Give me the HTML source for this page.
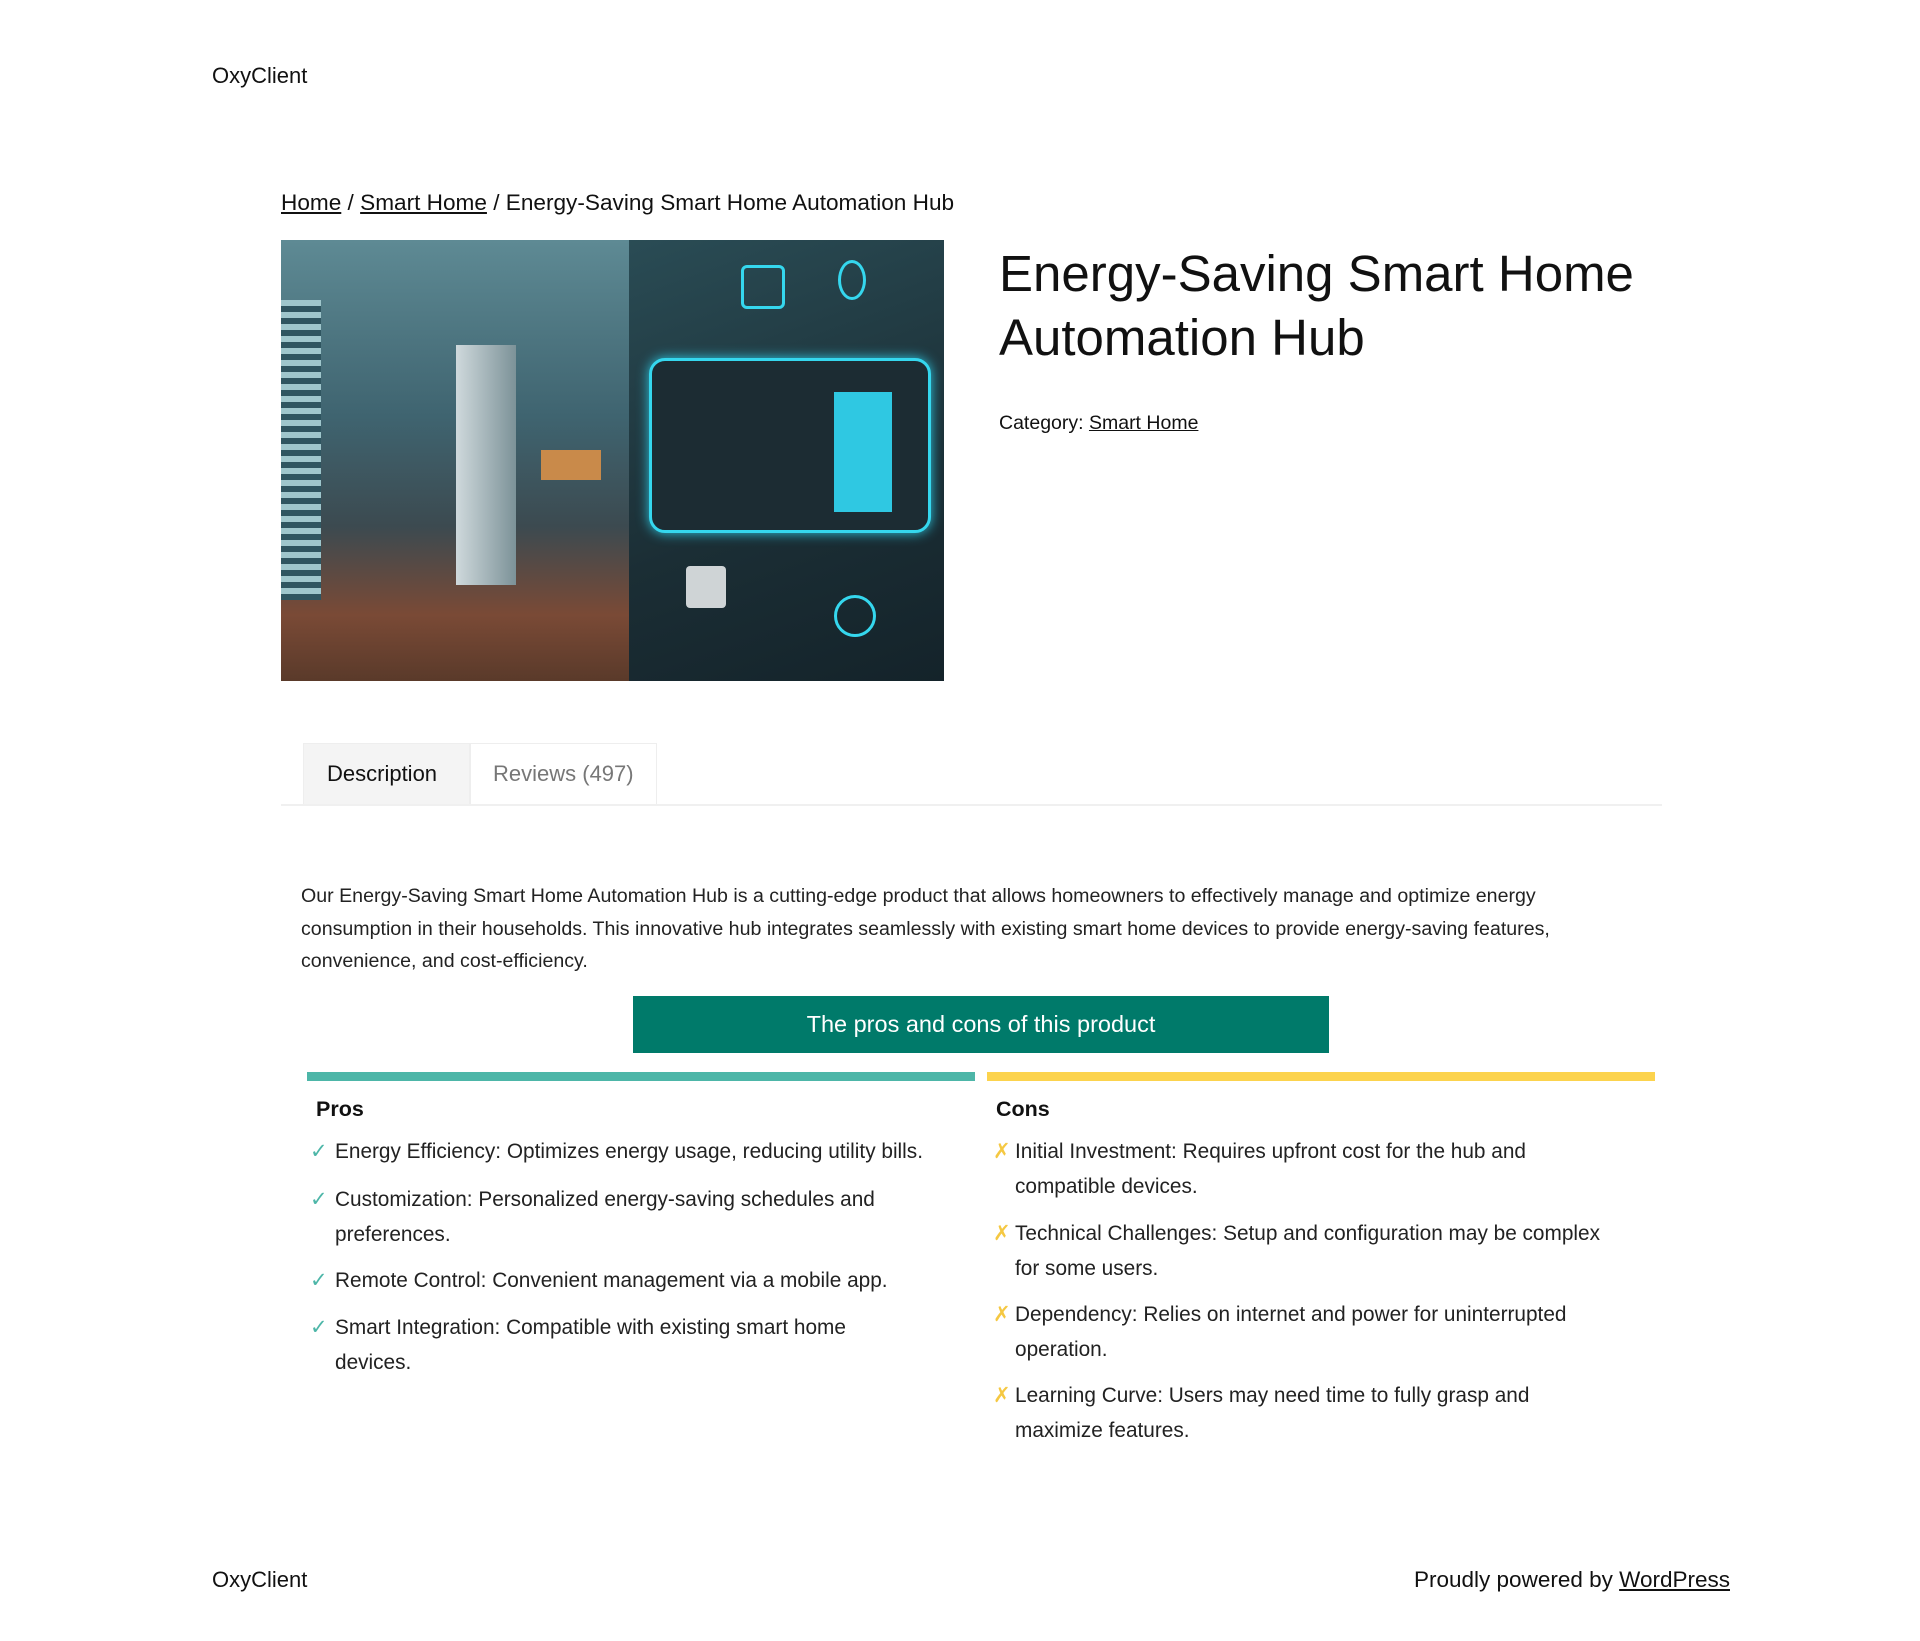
<!DOCTYPE html>
<html><head><meta charset="utf-8"><style>
*{margin:0;padding:0;box-sizing:border-box}
body{width:1920px;height:1641px;background:#fff;font-family:"Liberation Sans",sans-serif;color:#111;position:relative;overflow:hidden}
.a{position:absolute;white-space:nowrap}
a{color:#111;text-decoration:underline}
.li{font-size:20.8px;line-height:34.5px;color:#222}
.ck{color:#4db6a8;position:absolute;left:-25px}
.cx{color:#f5c842;position:absolute;left:-22px}
</style></head><body>
<div class="a" style="left:212px;top:63px;font-size:22px">OxyClient</div>
<div class="a" style="left:281px;top:190px;font-size:22.6px"><a>Home</a> / <a>Smart Home</a> / Energy-Saving Smart Home Automation Hub</div>

<div class="a" style="left:281px;top:240px;width:663px;height:441px;overflow:hidden;background:#2a3f48">
<div style="position:absolute;left:0;top:0;width:348px;height:441px;background:linear-gradient(180deg,#5e8a94 0%,#3f6470 40%,#3c4a50 65%,#7a4a36 85%,#5a3a2a 100%)"></div>
<div style="position:absolute;left:0;top:60px;width:40px;height:300px;background:repeating-linear-gradient(180deg,#9fc6cc 0 6px,#2f5560 6px 12px)"></div>
<div style="position:absolute;left:175px;top:105px;width:60px;height:240px;background:linear-gradient(90deg,#cfd9dc,#7c9298)"></div>
<div style="position:absolute;left:260px;top:210px;width:60px;height:30px;background:#c98a4a"></div>
<div style="position:absolute;left:348px;top:0;width:315px;height:441px;background:linear-gradient(160deg,#2a4c55,#1b2e35 60%,#14232a)"></div>
<div style="position:absolute;left:368px;top:118px;width:282px;height:175px;border:3px solid #35d7ee;border-radius:16px;background:#1c2c33;box-shadow:0 0 12px #2cc6e0"></div>
<div style="position:absolute;left:553px;top:152px;width:58px;height:120px;background:#2fc8e2"></div>
<div style="position:absolute;left:405px;top:326px;width:40px;height:42px;background:#cfd4d6;border-radius:4px"></div>
<div style="position:absolute;left:553px;top:355px;width:42px;height:42px;border:3px solid #35d7ee;border-radius:50%"></div>
<div style="position:absolute;left:460px;top:25px;width:44px;height:44px;border:3px solid #35d7ee;border-radius:6px"></div>
<div style="position:absolute;left:557px;top:20px;width:28px;height:40px;border:3px solid #35d7ee;border-radius:50%"></div>
</div>

<div class="a" style="left:999px;top:242px;font-size:51px;line-height:64px;color:#111">Energy-Saving Smart Home<br>Automation Hub</div>
<div class="a" style="left:999px;top:412px;font-size:19.5px">Category: <a>Smart Home</a></div>

<div class="a" style="left:303px;top:743px;width:167px;height:61px;background:#f4f4f4;border:1px solid #eee;border-bottom:none"></div>
<div class="a" style="left:470px;top:743px;width:187px;height:61px;border:1px solid #eee;border-bottom:none"></div>
<div class="a" style="left:327px;top:761px;font-size:22px;color:#111">Description</div>
<div class="a" style="left:493px;top:761px;font-size:22px;color:#777">Reviews (497)</div>
<div class="a" style="left:281px;top:804px;width:1381px;height:2px;background:#f0f0f0"></div>

<div class="a" style="left:301px;top:880px;font-size:19.6px;line-height:32.6px;color:#222">Our Energy-Saving Smart Home Automation Hub is a cutting-edge product that allows homeowners to effectively manage and optimize energy<br>consumption in their households. This innovative hub integrates seamlessly with existing smart home devices to provide energy-saving features,<br>convenience, and cost-efficiency.</div>

<div class="a" style="left:633px;top:996px;width:696px;height:57px;background:#007a6a;color:#fff;font-size:23.5px;line-height:57px;text-align:center">The pros and cons of this product</div>

<div class="a" style="left:307px;top:1072px;width:668px;height:9px;background:#4db6a8"></div>
<div class="a" style="left:987px;top:1072px;width:668px;height:9px;background:#fcd34d"></div>
<div class="a" style="left:316px;top:1097px;font-size:21.5px;font-weight:bold">Pros</div>
<div class="a" style="left:996px;top:1097px;font-size:21.5px;font-weight:bold">Cons</div>

<div class="a li" style="left:335px;top:1135px"><span class="ck">✓</span>Energy Efficiency: Optimizes energy usage, reducing utility bills.</div>
<div class="a li" style="left:335px;top:1183px"><span class="ck">✓</span>Customization: Personalized energy-saving schedules and<br>preferences.</div>
<div class="a li" style="left:335px;top:1264px"><span class="ck">✓</span>Remote Control: Convenient management via a mobile app.</div>
<div class="a li" style="left:335px;top:1311px"><span class="ck">✓</span>Smart Integration: Compatible with existing smart home<br>devices.</div>

<div class="a li" style="left:1015px;top:1135px"><span class="cx">✗</span>Initial Investment: Requires upfront cost for the hub and<br>compatible devices.</div>
<div class="a li" style="left:1015px;top:1217px"><span class="cx">✗</span>Technical Challenges: Setup and configuration may be complex<br>for some users.</div>
<div class="a li" style="left:1015px;top:1298px"><span class="cx">✗</span>Dependency: Relies on internet and power for uninterrupted<br>operation.</div>
<div class="a li" style="left:1015px;top:1379px"><span class="cx">✗</span>Learning Curve: Users may need time to fully grasp and<br>maximize features.</div>

<div class="a" style="left:212px;top:1567px;font-size:22px">OxyClient</div>
<div class="a" style="right:190px;top:1567px;font-size:22.5px">Proudly powered by <a>WordPress</a></div>
</body></html>
